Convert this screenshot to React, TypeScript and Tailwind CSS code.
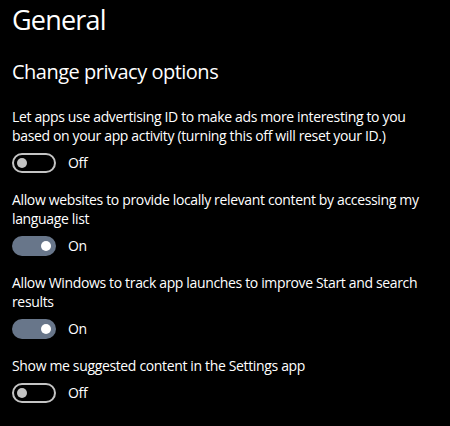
import React, { useState } from 'react';

interface PrivacyOption {
    id: string;
    label: string;
    enabled: boolean;
}

const initialOptions: PrivacyOption[] = [
    {
        id: 'ad-id',
        label: 'Let apps use advertising ID to make ads more interesting to you based on your app activity (turning this off will reset your ID.)',
        enabled: false,
    },
    {
        id: 'language',
        label: 'Allow websites to provide locally relevant content by accessing my language list',
        enabled: true,
    },
    {
        id: 'launches',
        label: 'Allow Windows to track app launches to improve Start and search results',
        enabled: true,
    },
    {
        id: 'suggested',
        label: 'Show me suggested content in the Settings app',
        enabled: false,
    },
];

const Toggle: React.FC<{ on: boolean; onClick: () => void }> = ({ on, onClick }) => (
    <button
        onClick={onClick}
        className="flex items-center gap-[12px] text-[14px] leading-[20px] tracking-[-0.3px] text-white"
    >
        <span
            className={
                on
                    ? 'flex h-[20px] w-[44px] items-center justify-end rounded-full bg-[#68768a] px-[5px]'
                    : 'flex h-[20px] w-[44px] items-center justify-start rounded-full border-2 border-[#c4c4c4] px-[3px]'
            }
        >
            <span className={on ? 'h-[10px] w-[10px] rounded-full bg-white' : 'h-[10px] w-[10px] rounded-full bg-[#c4c4c4]'} />
        </span>
        <span>{on ? 'On' : 'Off'}</span>
    </button>
);

const App: React.FC = () => {
    const [options, setOptions] = useState(initialOptions);

    const toggle = (id: string) => {
        setOptions(options.map(o => (o.id === id ? { ...o, enabled: !o.enabled } : o)));
    };

    return (
        <div
            className="h-[426px] w-[450px] overflow-hidden bg-black pl-[12px] text-white"
            style={{ fontFamily: '"Open Sans", "Noto Sans", sans-serif' }}
        >
            <h1 className="pt-[2px] text-[27px] leading-[36px] font-normal tracking-[-0.8px]">General</h1>
            <h2 className="mt-[20px] text-[20px] leading-[27px] font-normal tracking-[-0.5px]">Change privacy options</h2>
            <div className="mt-[22px] flex w-[430px] flex-col gap-[17px]">
                {options.map(option => (
                    <div key={option.id} className="flex flex-col">
                        <p className="text-[14px] leading-[19px] tracking-[-0.35px]">{option.label}</p>
                        <div className="mt-[8px]">
                            <Toggle on={option.enabled} onClick={() => toggle(option.id)} />
                        </div>
                    </div>
                ))}
            </div>
        </div>
    );
};

export default App;
